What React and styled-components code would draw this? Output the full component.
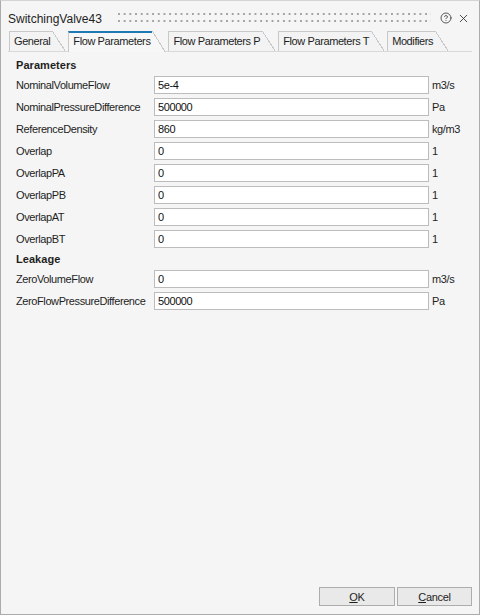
import React from "react";
import styled, { createGlobalStyle } from "styled-components";
import { CircleHelp, X } from "lucide-react";

const Global = createGlobalStyle`
  html, body { margin: 0; padding: 0; background: #f5f5f5; }
  * { box-sizing: border-box; }
`;

const Window = styled.div`
  width: 480px;
  height: 615px;
  display: flex;
  flex-direction: column;
  background: #f5f5f5;
  border: 1px solid #ababab;
  border-top-color: #d4d4d4;
  font-family: "Liberation Sans", Arial, sans-serif;
  color: #1e1e1e;
`;

const TitleBar = styled.div`
  height: 30px;
  display: flex;
  align-items: center;
  padding: 0 9px 0 7px;
`;

const Title = styled.div`
  font-size: 12px;
  color: #1e1e1e;
  margin-top: 5px;
  margin-right: 16px;
`;

const Grip = styled.div`
  flex: 1;
  height: 9px;
  margin-top: 3px;
  background-image: linear-gradient(90deg, #a3a3a3 2px, transparent 2px),
    linear-gradient(90deg, #a3a3a3 2px, transparent 2px);
  background-size: 5.7px 2px, 5.7px 2px;
  background-position: 0 0, 0 7px;
  background-repeat: repeat-x;
`;

const TitleIcons = styled.div`
  display: flex;
  align-items: center;
  gap: 5px;
  margin-top: 4px;
  margin-left: 9px;
  color: #333;
`;

const TabStrip = styled.div`
  display: flex;
  height: 21px;
  margin: 0 7px 0 7px;
  padding-left: 1px;
  gap: 3px;
  border-bottom: 1px solid #d9d9d9;
`;

const Tab = styled.div`
  position: relative;
  height: 20px;
  padding: 0 15px 0 5px;
  display: flex;
  align-items: center;
  font-size: 11px;
  letter-spacing: -0.4px;
  color: #1e1e1e;
  z-index: ${(p) => (p.$active ? 2 : 1)};

  &::before {
    content: "";
    position: absolute;
    left: 0;
    top: 0;
    bottom: ${(p) => (p.$active ? "-1px" : "0")};
    right: 12px;
    background: ${(p) => (p.$active ? "#f7f7f7" : "#f3f3f3")};
    border-left: 1px solid #c8c8c8;
    border-top: ${(p) => (p.$active ? "2px solid #1f7ab3" : "1px solid #c8c8c8")};
    z-index: -1;
  }

  &::after {
    content: "";
    position: absolute;
    right: 0;
    top: 0;
    bottom: ${(p) => (p.$active ? "-1px" : "0")};
    width: 13px;
    background: ${(p) =>
      `linear-gradient(to bottom left, transparent calc(50% - 0.7px), #c8c8c8 calc(50% - 0.7px), #c8c8c8 calc(50% + 0.3px), ${
        p.$active ? "#f7f7f7" : "#f3f3f3"
      } calc(50% + 0.3px))`};
    z-index: -1;
  }
`;

const Content = styled.div`
  flex: 1;
  padding: 6px 15px 0 15px;
  display: flex;
  flex-direction: column;
  gap: 4px;
`;

const Heading = styled.div`
  height: 14px;
  line-height: 14px;
  font-size: 11px;
  font-weight: bold;
  letter-spacing: 0.05px;
  color: #1e1e1e;
`;

const Row = styled.div`
  display: grid;
  grid-template-columns: 138px 275px auto;
  align-items: center;
  height: 18px;
`;

const Label = styled.div`
  font-size: 11px;
  letter-spacing: -0.4px;
  line-height: 18px;
  white-space: nowrap;
  color: #1e1e1e;
`;

const Input = styled.input`
  height: 18px;
  width: 275px;
  border: 1px solid #bcbcbc;
  background: #fff;
  padding: 0 3px;
  margin: 0;
  font-family: "Liberation Sans", Arial, sans-serif;
  font-size: 11px;
  letter-spacing: -0.4px;
  color: #111;
  outline: none;
`;

const Unit = styled.div`
  font-size: 11px;
  letter-spacing: -0.4px;
  padding-left: 3px;
  color: #1e1e1e;
`;

const Footer = styled.div`
  display: flex;
  justify-content: flex-end;
  gap: 2px;
  padding: 0 7px 8px 0;
`;

const Button = styled.button`
  width: ${(p) => p.$w}px;
  height: 19px;
  border: 1px solid #adadad;
  background: #e9e9e9;
  font-family: "Liberation Sans", Arial, sans-serif;
  font-size: 11px;
  letter-spacing: -0.3px;
  color: #1e1e1e;
  padding: 0;
  cursor: default;
  & u { text-underline-offset: 1px; }
`;

const tabs = [
  "General",
  "Flow Parameters",
  "Flow Parameters P",
  "Flow Parameters T",
  "Modifiers",
];

const params = [
  ["NominalVolumeFlow", "5e-4", "m3/s"],
  ["NominalPressureDifference", "500000", "Pa"],
  ["ReferenceDensity", "860", "kg/m3"],
  ["Overlap", "0", "1"],
  ["OverlapPA", "0", "1"],
  ["OverlapPB", "0", "1"],
  ["OverlapAT", "0", "1"],
  ["OverlapBT", "0", "1"],
];

const leakage = [
  ["ZeroVolumeFlow", "0", "m3/s"],
  ["ZeroFlowPressureDifference", "500000", "Pa"],
];

function Field({ label, value, unit }) {
  return (
    <Row>
      <Label>{label}</Label>
      <Input defaultValue={value} />
      <Unit>{unit}</Unit>
    </Row>
  );
}

export default function App() {
  return (
    <>
      <Global />
      <Window>
        <TitleBar>
          <Title>SwitchingValve43</Title>
          <Grip />
          <TitleIcons>
            <CircleHelp size={12} strokeWidth={1.6} />
            <X size={13} strokeWidth={1.6} />
          </TitleIcons>
        </TitleBar>
        <TabStrip>
          {tabs.map((t, i) => (
            <Tab key={t} $active={i === 1}>
              {t}
            </Tab>
          ))}
        </TabStrip>
        <Content>
          <Heading>Parameters</Heading>
          {params.map(([l, v, u]) => (
            <Field key={l} label={l} value={v} unit={u} />
          ))}
          <Heading>Leakage</Heading>
          {leakage.map(([l, v, u]) => (
            <Field key={l} label={l} value={v} unit={u} />
          ))}
        </Content>
        <Footer>
          <Button $w={76}>
            <u>O</u>K
          </Button>
          <Button $w={75}>
            <u>C</u>ancel
          </Button>
        </Footer>
      </Window>
    </>
  );
}
